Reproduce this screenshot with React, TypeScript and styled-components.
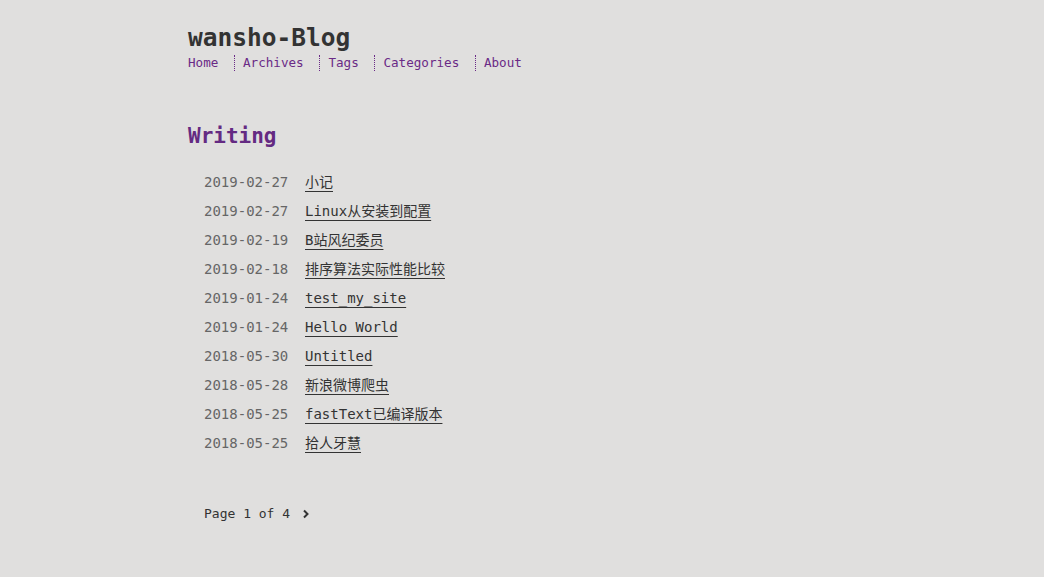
import React from "react";
import styled, { createGlobalStyle } from "styled-components";

const Global = createGlobalStyle`
  html, body {
    margin: 0;
    padding: 0;
    background: #e0dfde;
  }
  body {
    font-family: "DejaVu Sans Mono", "Noto Sans CJK SC", monospace;
    color: #333;
  }
`;

const Page = styled.div`
  width: 668px;
  margin: 0 auto;
  padding-top: 23px;
`;

const Header = styled.header`
  display: flex;
  flex-direction: column;
`;

const SiteTitle = styled.h1`
  margin: 0;
  font-size: 24.5px;
  line-height: 30px;
  font-weight: bold;
  color: #333;
`;

const Nav = styled.nav`
  display: flex;
  align-items: center;
  margin-top: 2px;
`;

const NavItem = styled.a<{ $first?: boolean }>`
  font-size: 12.6px;
  line-height: 16px;
  color: #6a2a86;
  text-decoration: none;
  padding: 0 15.5px 0 ${(p) => (p.$first ? "0" : "8.2px")};
  border-left: ${(p) => (p.$first ? "none" : "1px dotted #6a2a86")};
`;

const Section = styled.main`
  margin-top: 51px;
`;

const Heading = styled.h2`
  margin: 0 0 22px;
  font-size: 21px;
  line-height: 28px;
  font-weight: bold;
  color: #642a82;
`;

const List = styled.ul`
  list-style: none;
  margin: 0;
  padding: 0 0 0 16px;
  display: flex;
  flex-direction: column;
  gap: 8px;
`;

const Row = styled.li`
  display: flex;
  font-size: 14px;
  line-height: 21px;
`;

const DateText = styled.span`
  color: #666;
  width: 101px;
  flex: none;
`;

const PostLink = styled.a`
  color: #333;
  text-decoration: underline;
  text-underline-offset: 4px;
  text-decoration-skip-ink: none;
`;

const Pager = styled.div`
  display: flex;
  align-items: center;
  gap: 12px;
  margin: 51px 0 0 16px;
  font-size: 13px;
  line-height: 18px;
  color: #333;
`;

const posts = [
  ["2019-02-27", "小记"],
  ["2019-02-27", "Linux从安装到配置"],
  ["2019-02-19", "B站风纪委员"],
  ["2019-02-18", "排序算法实际性能比较"],
  ["2019-01-24", "test_my_site"],
  ["2019-01-24", "Hello World"],
  ["2018-05-30", "Untitled"],
  ["2018-05-28", "新浪微博爬虫"],
  ["2018-05-25", "fastText已编译版本"],
  ["2018-05-25", "拾人牙慧"],
];

const navItems = ["Home", "Archives", "Tags", "Categories", "About"];

export default function App() {
  return (
    <>
      <Global />
      <Page>
        <Header>
          <SiteTitle>wansho-Blog</SiteTitle>
          <Nav>
            {navItems.map((n, i) => (
              <NavItem key={n} href="#" $first={i === 0}>
                {n}
              </NavItem>
            ))}
          </Nav>
        </Header>
        <Section>
          <Heading>Writing</Heading>
          <List>
            {posts.map(([d, t], i) => (
              <Row key={i}>
                <DateText>{d}</DateText>
                <PostLink href="#">{t}</PostLink>
              </Row>
            ))}
          </List>
          <Pager>
            <span>Page 1 of 4</span>
            <svg width="8" height="10" viewBox="0 0 8 10">
              <path d="M2 1.5 L5.5 5 L2 8.5" fill="none" stroke="#333" strokeWidth="2" />
            </svg>
          </Pager>
        </Section>
      </Page>
    </>
  );
}
